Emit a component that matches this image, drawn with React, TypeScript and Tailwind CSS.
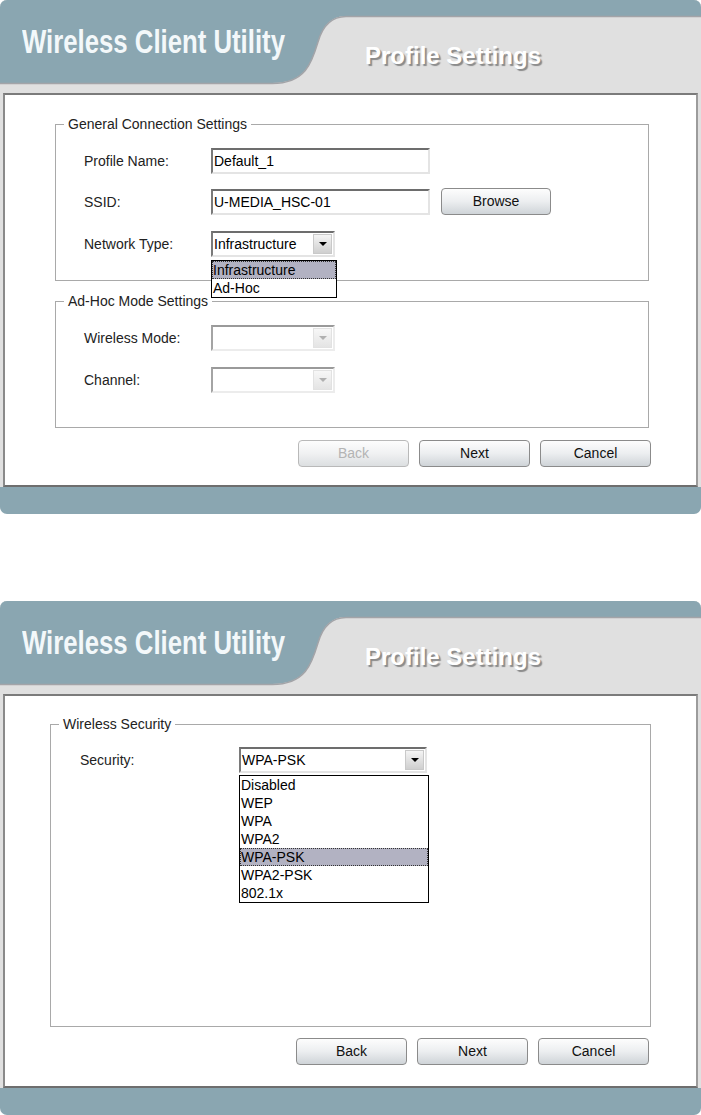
import React from 'react';

type Item = { label: string; active?: boolean };

function Header() {
  return (
    <div className="relative h-[93px] bg-[#e0e0e0]">
      {/* blue title swoosh */}
      <svg className="absolute inset-0" width="701" height="93" viewBox="0 0 701 93">
        <path d="M0 0 H701 V16 H346 C330 16 322 28 318 42 C312 62 306 83 272 83 H0 Z" fill="#8aa6b1" />
        <path
          d="M701 16.5 H346 C330 16.5 322 28 318 42 C312 62 306 83.5 272 83.5 H0"
          fill="none"
          stroke="#a3a4a8"
          strokeWidth="1.5"
        />
      </svg>
      <div className="relative flex">
        <div className="w-[365px] pl-[22px] pt-[25px]">
          <div className="origin-left scale-x-[0.78] whitespace-nowrap text-[33px] font-bold leading-none text-[#f3f8fa]">
            Wireless Client Utility
          </div>
        </div>
        <div className="whitespace-nowrap pt-[44px] text-[24px] font-bold leading-none text-white [text-shadow:2px_2px_1px_#8a8a8a]">
          Profile Settings
        </div>
      </div>
    </div>
  );
}

function Window({ children }: { children: React.ReactNode }) {
  return (
    <div className="flex h-[514px] w-[701px] flex-col overflow-hidden rounded-[7px] bg-[#8aa6b1]">
      <Header />
      <div className="flex h-[394px] bg-[#e0e0e0] px-[3px]">
        <div className="flex-1 border-2 border-t-[#7b7b7b] border-l-[#8a8a8a] border-r-[#9c9c9c] border-b-[#6e6e6e] bg-white">
          {children}
        </div>
      </div>
    </div>
  );
}

function TextBox({ value, className }: { value: string; className: string }) {
  return (
    <div
      className={`h-[26px] border-2 border-t-[#6d6d6d] border-l-[#7a7a7a] border-r-[#e4e4e4] border-b-[#e4e4e4] bg-white pl-[1px] text-[14px] leading-[22px] text-black ${className}`}
    >
      {value}
    </div>
  );
}

function DropList({ items, className }: { items: Item[]; className: string }) {
  return (
    <div className={`absolute left-[-2px] z-10 border border-black bg-white ${className}`}>
      {items.map((it) => (
        <div
          key={it.label}
          className={
            it.active
              ? 'h-[18px] bg-[#b2b2c2] pl-[1px] text-[14px] leading-[18px] text-black outline-1 -outline-offset-1 outline-dotted outline-[#333]'
              : 'h-[18px] pl-[1px] text-[14px] leading-[18px] text-black'
          }
        >
          {it.label}
        </div>
      ))}
    </div>
  );
}

function Select({
  value,
  className,
  disabled,
  children,
}: {
  value?: string;
  className: string;
  disabled?: boolean;
  children?: React.ReactNode;
}) {
  return (
    <div
      className={
        disabled
          ? `relative flex h-[26px] border-2 border-t-[#9a9a9a] border-l-[#a4a4a4] border-r-[#ececec] border-b-[#ececec] bg-white ${className}`
          : `relative flex h-[26px] border-2 border-t-[#6d6d6d] border-l-[#7a7a7a] border-r-[#e4e4e4] border-b-[#e4e4e4] bg-white ${className}`
      }
    >
      <div className="flex-1 pl-[1px] text-[14px] leading-[22px] text-black">{value}</div>
      <div
        className={
          disabled
            ? 'my-[1px] mr-[1px] flex w-[19px] items-center justify-center border border-[#e2e2e2] bg-linear-to-b from-[#f7f7f7] to-[#e4e4e4]'
            : 'my-[1px] mr-[1px] flex w-[19px] items-center justify-center border border-[#c9c9c9] bg-linear-to-b from-[#f4f4f4] to-[#cfcfcf]'
        }
      >
        <svg width="8" height="4" viewBox="0 0 8 4">
          <path d="M0 0 H8 L4 4 Z" fill={disabled ? '#b0b0b0' : '#000'} />
        </svg>
      </div>
      {children}
    </div>
  );
}

function Btn({ label, disabled, className }: { label: string; disabled?: boolean; className: string }) {
  return (
    <div
      className={
        disabled
          ? `flex h-[27px] items-center justify-center rounded-[4px] border border-[#b9b9b9] bg-linear-to-b from-[#fdfdfd] via-[#f0f1f2] to-[#dcdfe1] text-[14px] text-[#b4b4b4] ${className}`
          : `flex h-[27px] items-center justify-center rounded-[4px] border border-[#8b8b8b] bg-linear-to-b from-[#fdfdfd] via-[#eceef0] to-[#cfd4d8] text-[14px] text-[#111] ${className}`
      }
    >
      {label}
    </div>
  );
}

function Label({ text, className }: { text: string; className: string }) {
  return <div className={`text-[14px] leading-[16px] text-[#222] ${className}`}>{text}</div>;
}

export default function App() {
  return (
    <div className="w-[701px] bg-white font-['Liberation_Sans',Arial,sans-serif]">
      {/* Step 1: general connection */}
      <Window>
        <fieldset className="ml-[50px] mt-[21px] w-[594px] border border-[#a9a9a9] pb-[23px]">
          <legend className="ml-[8px] px-[4px] text-[14px] leading-[16px] text-[#222]">General Connection Settings</legend>
          <div className="flex flex-col pt-[16px]">
            <div className="flex items-center">
              <Label text="Profile Name:" className="w-[155px] pl-[28px]" />
              <TextBox value="Default_1" className="w-[219px]" />
            </div>
            <div className="mt-[14px] flex items-center">
              <Label text="SSID:" className="w-[155px] pl-[28px]" />
              <TextBox value="U-MEDIA_HSC-01" className="w-[219px]" />
              <Btn label="Browse" className="ml-[11px] h-[26px] w-[110px]" />
            </div>
            <div className="mt-[16px] flex items-center">
              <Label text="Network Type:" className="w-[155px] pl-[28px]" />
              <Select value="Infrastructure" className="w-[124px]">
                <DropList
                  className="top-[27px] w-[126px]"
                  items={[{ label: 'Infrastructure', active: true }, { label: 'Ad-Hoc' }]}
                />
              </Select>
            </div>
          </div>
        </fieldset>

        <fieldset className="ml-[50px] mt-[12px] w-[594px] border border-[#a9a9a9] pb-[34px]">
          <legend className="ml-[8px] px-[4px] text-[14px] leading-[16px] text-[#222]">Ad-Hoc Mode Settings</legend>
          <div className="flex flex-col pt-[16px]">
            <div className="flex items-center">
              <Label text="Wireless Mode:" className="w-[155px] pl-[28px]" />
              <Select disabled className="w-[124px]" />
            </div>
            <div className="mt-[16px] flex items-center">
              <Label text="Channel:" className="w-[155px] pl-[28px]" />
              <Select disabled className="w-[124px]" />
            </div>
          </div>
        </fieldset>

        <div className="mt-[12px] flex justify-end gap-[10px] pr-[45px]">
          <Btn label="Back" disabled className="w-[111px]" />
          <Btn label="Next" className="w-[111px]" />
          <Btn label="Cancel" className="w-[111px]" />
        </div>
      </Window>

      <div className="h-[87px]" />

      {/* Step 2: security */}
      <Window>
        <fieldset className="ml-[45px] mt-[20px] w-[601px] border border-[#a9a9a9] pb-[253px]">
          <legend className="ml-[8px] px-[4px] text-[14px] leading-[16px] text-[#222]">Wireless Security</legend>
          <div className="flex items-center pt-[15px]">
            <Label text="Security:" className="w-[188px] pl-[29px]" />
            <Select value="WPA-PSK" className="w-[188px]">
              <DropList
                className="top-[26px] w-[190px]"
                items={[
                  { label: 'Disabled' },
                  { label: 'WEP' },
                  { label: 'WPA' },
                  { label: 'WPA2' },
                  { label: 'WPA-PSK', active: true },
                  { label: 'WPA2-PSK' },
                  { label: '802.1x' },
                ]}
              />
            </Select>
          </div>
        </fieldset>

        <div className="mt-[11px] flex justify-end gap-[10px] pr-[47px]">
          <Btn label="Back" className="w-[111px]" />
          <Btn label="Next" className="w-[111px]" />
          <Btn label="Cancel" className="w-[111px]" />
        </div>
      </Window>
    </div>
  );
}
